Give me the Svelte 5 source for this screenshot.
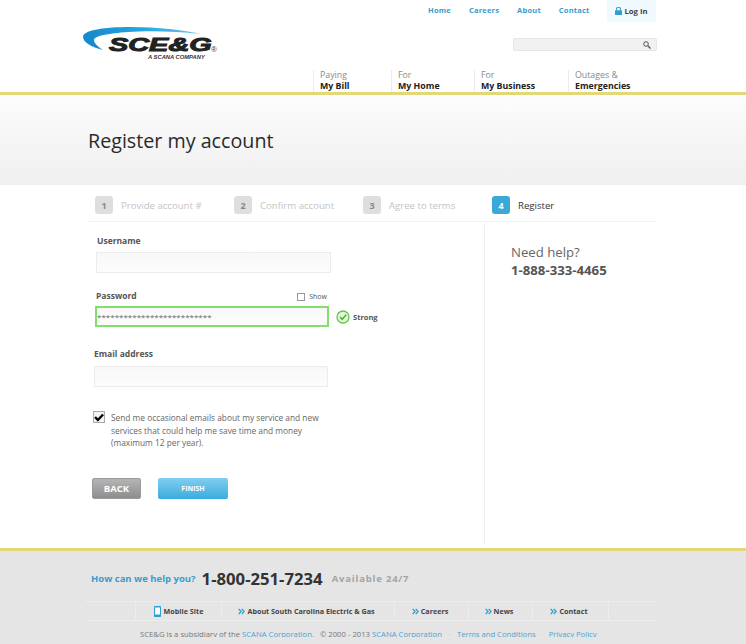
<script lang="ts">
  const topLinks = ['Home', 'Careers', 'About', 'Contact'];
  const mainNav = [
    { top: 'Paying', bottom: 'My Bill', width: 78 },
    { top: 'For', bottom: 'My Home', width: 83 },
    { top: 'For', bottom: 'My Business', width: 94 },
    { top: 'Outages &', bottom: 'Emergencies', width: 88 }
  ];
  const steps = [
    { n: 1, label: 'Provide account #', width: 139 },
    { n: 2, label: 'Confirm account', width: 129 },
    { n: 3, label: 'Agree to terms', width: 129 },
    { n: 4, label: 'Register', width: 80, active: true }
  ];
  const footerLinks = [
    { label: 'About South Carolina Electric & Gas', width: 173 },
    { label: 'Careers', width: 74 },
    { label: 'News', width: 64 },
    { label: 'Contact', width: 77 }
  ];
</script>

<div class="page">
  <header class="header">
    <div class="top-nav">
      {#each topLinks as link}
        <a class="top-link" href="#top">{link}</a>
      {/each}
      <a class="login" href="#top">
        <svg width="7" height="8" viewBox="0 0 7 8"><path d="M1.500 3.500V2.300a2 2 0 0 1 4 0v1.200" fill="none" stroke="#2f9fd0" stroke-width="1.100"/><rect y="3.200" width="7" height="4.800" rx=".6" fill="#2f9fd0"/></svg>
        Log In
      </a>
    </div>

    <div class="logo">
      <svg class="swoosh" width="120" height="26" viewBox="0 0 120 26">
        <defs>
          <linearGradient id="swoosh-fill" x1="0" x2="1" y1="0" y2="0">
            <stop offset="0" stop-color="#1488cc"/>
            <stop offset=".5" stop-color="#25a5e0"/>
            <stop offset="1" stop-color="#6cc3ea"/>
          </linearGradient>
        </defs>
        <path d="M20 23C8 20 0 15 0 10C0 3 22 0 47 0C75 0 100 3 118 7C92 4 65 3.500 45 5C25 6.500 11 9 11 13C11 16 15 20 20 23Z" fill="url(#swoosh-fill)"/>
      </svg>
      <span class="logo-word">SCE&amp;G</span>
      <span class="logo-reg">®</span>
      <span class="logo-sub">A SCANA COMPANY</span>
    </div>

    <div class="search">
      <svg width="8" height="8" viewBox="0 0 8 8"><circle cx="3" cy="3" r="2.300" fill="none" stroke="#555" stroke-width="1"/><path d="M4.800 4.800 7.500 7.500" stroke="#555" stroke-width="1.300"/></svg>
    </div>

    <nav class="main-nav">
      {#each mainNav as item}
        <a class="main-item" href="#top" style:width="{item.width}px">
          <span class="main-top">{item.top}</span>
          <span class="main-bottom">{item.bottom}</span>
        </a>
      {/each}
    </nav>
  </header>

  <section class="hero">
    <h1>Register my account</h1>
  </section>

  <main class="content">
    <ol class="steps">
      {#each steps as step}
        <li class="step" class:active={step.active} style:width="{step.width}px">
          <span class="step-num">{step.n}</span>
          <span class="step-label">{step.label}</span>
        </li>
      {/each}
    </ol>

    <div class="columns">
      <form class="form">
        <div class="field username">
          <label for="username">Username</label>
          <div id="username" class="input"></div>
        </div>

        <div class="field password">
          <div class="label-row">
            <label for="password">Password</label>
            <span class="show"><span class="show-box"></span>Show</span>
          </div>
          <div class="password-row">
            <div id="password" class="input strong">**************************</div>
            <span class="strength">
              <svg width="14" height="14" viewBox="0 0 14 14"><circle cx="7" cy="7" r="6" fill="#e4f7dc" stroke="#62c845" stroke-width="1.300"/><path d="M4 7l2.200 2.300L10.200 4.800" fill="none" stroke="#4fb233" stroke-width="1.600"/></svg>
              Strong
            </span>
          </div>
        </div>

        <div class="field email">
          <label for="email">Email address</label>
          <div id="email" class="input"></div>
        </div>

        <div class="optin">
          <span class="optin-box">
            <svg width="11" height="9" viewBox="0 0 11 9"><path d="M1.200 4 4.200 7.200 10 1.200" fill="none" stroke="#000" stroke-width="2.600"/></svg>
          </span>
          <p>Send me occasional emails about my service and new services that could help me save time and money (maximum 12 per year).</p>
        </div>

        <div class="buttons">
          <a class="btn back" href="#top">BACK</a>
          <a class="btn finish" href="#top">FINISH</a>
        </div>
      </form>

      <aside class="help">
        <p class="help-title">Need help?</p>
        <p class="help-phone">1-888-333-4465</p>
      </aside>
    </div>
  </main>

  <footer class="footer">
    <div class="callout">
      <span class="callout-q">How can we help you?</span>
      <span class="callout-phone">1-800-251-7234</span>
      <span class="callout-avail">Available 24/7</span>
    </div>

    <div class="footer-nav">
      <a class="foot-item mobile" href="#top">
        <svg width="7" height="11" viewBox="0 0 7 11"><rect x=".5" y=".5" width="6" height="10" rx="1" fill="#fff" stroke="#2f9fd0"/><rect x="0" y="8.500" width="7" height="2.500" rx="1" fill="#2f9fd0"/><rect x="0" y="0" width="7" height="1.500" rx=".7" fill="#2f9fd0"/></svg>
        Mobile Site
      </a>
      {#each footerLinks as link}
        <a class="foot-item" href="#top" style:width="{link.width}px">
          <svg width="7" height="7" viewBox="0 0 8 7"><path d="M.8.500 3.500 3.500.8 6.500M4.300.500 7 3.500 4.300 6.500" fill="none" stroke="#2f9fd0" stroke-width="1.500"/></svg>
          {link.label}
        </a>
      {/each}
    </div>

    <p class="legal">
      SCE&amp;G is a subsidiary of the <a href="#top">SCANA Corporation.</a>
      <span class="copy">© 2000 - 2013</span> <a href="#top">SCANA Corporation</a>
      <span class="sep first">·</span> <a href="#top">Terms and Conditions</a>
      <span class="sep">·</span> <a href="#top">Privacy Policy</a>
    </p>
  </footer>
</div>

<style>
  :global(body) {
    margin: 0;
    background: #fff;
  }

  .page {
    width: 746px;
    height: 644px;
    overflow: hidden;
    font-family: 'Open Sans', sans-serif;
    color: #555;
  }

  a {
    text-decoration: none;
  }

  .header {
    position: relative;
    height: 92px;
    border-bottom: 3px solid #e3d877;
    box-sizing: content-box;
  }

  .top-nav {
    display: flex;
    justify-content: flex-end;
    align-items: flex-start;
    padding-right: 90px;
  }

  .top-link {
    font-size: 7.500px;
    font-weight: 700;
    color: #3a9ccb;
    margin-right: 18px;
    line-height: 20px;
    letter-spacing: 0.2px;
  }

  .top-link:nth-child(4) {
    margin-right: 17.500px;
  }

  .login {
    display: flex;
    align-items: center;
    gap: 2px;
    width: 49px;
    height: 22px;
    justify-content: center;
    background: #eff9fe;
    font-size: 7.700px;
    font-weight: 700;
    color: #444;
  }

  .logo {
    position: absolute;
    left: 83px;
    top: 27px;
    width: 140px;
    height: 36px;
  }

  .swoosh {
    position: absolute;
    left: 0;
    top: 0;
  }

  .logo-word {
    position: absolute;
    left: 26px;
    top: 6px;
    font-family: 'Liberation Sans', sans-serif;
    font-weight: 700;
    font-style: italic;
    font-size: 19px;
    line-height: 24px;
    color: #222;
    -webkit-text-stroke: 1px #222;
    transform: scaleX(1.520);
    transform-origin: left center;
  }

  .logo-reg {
    position: absolute;
    left: 128px;
    top: 18px;
    font-family: 'Liberation Sans', sans-serif;
    font-size: 8px;
    line-height: 10px;
    color: #333;
  }

  .logo-sub {
    position: absolute;
    left: 65px;
    top: 26px;
    font-family: 'Liberation Sans', sans-serif;
    font-style: italic;
    font-weight: 700;
    font-size: 5.800px;
    line-height: 8px;
    color: #333;
    white-space: nowrap;
  }

  .search {
    position: absolute;
    left: 513px;
    top: 38px;
    width: 144px;
    height: 13px;
    box-sizing: border-box;
    background: #f1f1f1;
    border: 1px solid #e6e6e6;
    border-radius: 2px;
    display: flex;
    align-items: center;
    justify-content: flex-end;
    padding-right: 5px;
  }

  .main-nav {
    position: absolute;
    left: 313px;
    top: 70px;
    display: flex;
  }

  .main-item {
    display: flex;
    flex-direction: column;
    box-sizing: border-box;
    height: 22px;
    padding-left: 6px;
    border-left: 1px solid #ececec;
    font-size: 8.800px;
    line-height: 11px;
  }

  .main-top {
    color: #8a8a8a;
  }

  .main-bottom {
    color: #222;
    font-weight: 700;
  }

  .hero {
    height: 90px;
    background: linear-gradient(#fdfdfd, #efefef);
    box-sizing: border-box;
    padding: 32px 0 0 88px;
  }

  h1 {
    margin: 0;
    font-size: 19.700px;
    line-height: 27px;
    font-weight: 400;
    color: #2a2a2a;
  }

  .content {
    height: 363px;
    padding-left: 88px;
  }

  .steps {
    list-style: none;
    margin: 0;
    padding: 0 0 0 7px;
    width: 568px;
    height: 37px;
    box-sizing: border-box;
    display: flex;
    align-items: flex-start;
    border-bottom: 1px solid #f2f2f2;
  }

  .step {
    display: flex;
    align-items: center;
    gap: 8px;
    padding-top: 11px;
    box-sizing: border-box;
  }

  .step-num {
    width: 18px;
    height: 18px;
    border-radius: 3px;
    background: #dedede;
    color: #888;
    font-size: 9px;
    font-weight: 700;
    display: flex;
    align-items: center;
    justify-content: center;
  }

  .step-label {
    font-size: 9.600px;
    color: #c4c4c4;
    white-space: nowrap;
  }

  .active .step-num {
    background: #3aa9d6;
    color: #fff;
  }

  .active .step-label {
    color: #333;
  }

  .columns {
    display: flex;
    height: 325px;
    margin-top: 1px;
  }

  .form {
    width: 396px;
    box-sizing: border-box;
  }

  .field label {
    font-size: 8.500px;
    font-weight: 700;
    color: #555;
    line-height: 12px;
    display: block;
  }

  .input {
    box-sizing: border-box;
    height: 21px;
    width: 235px;
    background: linear-gradient(#f8f8f8, #fcfcfc);
    border: 1px solid #ececec;
    font-size: 8px;
    color: #666;
  }

  .username {
    padding: 12px 0 0 8px;
  }

  .username label {
    margin: 0 0 5px 1px;
  }

  .password {
    padding: 17px 0 0 7px;
  }

  .password label {
    margin-left: 1px;
  }

  .label-row {
    display: flex;
    justify-content: space-between;
    align-items: flex-end;
    width: 232px;
    margin-bottom: 4px;
  }

  .show {
    display: flex;
    align-items: center;
    gap: 4px;
    font-size: 7px;
    line-height: 10px;
    color: #555;
  }

  .show-box {
    width: 6px;
    height: 6px;
    border: 1px solid #999;
    background: #fff;
  }

  .password-row {
    display: flex;
    align-items: center;
    gap: 7px;
  }

  .input.strong {
    width: 234px;
    border: 2px solid #83df6d;
    line-height: 17px;
  }

  .strength {
    display: flex;
    align-items: center;
    gap: 3px;
    font-size: 7.500px;
    font-weight: 700;
    color: #555;
  }

  .email {
    padding: 21px 0 0 6px;
  }

  .email label {
    margin: 0 0 6px;
  }

  .email .input {
    width: 234px;
  }

  .optin {
    display: flex;
    gap: 6px;
    margin: 24px 0 0 5px;
  }

  .optin-box {
    flex: none;
    width: 10px;
    height: 10px;
    border: 1px solid #aaa;
    background: #f4f4f4;
    display: flex;
    align-items: center;
    justify-content: center;
    box-sizing: content-box;
  }

  .optin p {
    margin: 1px 0 0;
    width: 222px;
    font-size: 8.340px;
    line-height: 12.500px;
    color: #666;
  }

  .buttons {
    display: flex;
    gap: 17px;
    margin: 28px 0 0 4px;
  }

  .btn {
    display: flex;
    align-items: center;
    justify-content: center;
    box-sizing: border-box;
    height: 21px;
    border-radius: 2px;
    color: #fff;
    font-weight: 700;
  }

  .back {
    width: 49px;
    font-size: 9.500px;
    background: linear-gradient(#b5b5b5, #8e8e8e);
    border: 1px solid #9a9a9a;
  }

  .finish {
    width: 70px;
    font-size: 7px;
    background: linear-gradient(#7fcfef, #3cabde);
  }

  .help {
    border-left: 1px solid #eee;
    margin-top: 2px;
    padding: 18px 0 0 26px;
    height: 320px;
    box-sizing: border-box;
  }

  .help p {
    margin: 0;
  }

  .help-title {
    font-size: 13.200px;
    line-height: 18px;
    color: #666;
  }

  .help-phone {
    font-size: 13.200px;
    line-height: 18px;
    font-weight: 700;
    color: #555;
  }

  .footer {
    height: 96px;
    border-top: 3px solid #e3d877;
    background: #e5e5e5;
    box-sizing: border-box;
  }

  .callout {
    display: flex;
    align-items: center;
    gap: 6px;
    padding: 15px 0 0 91px;
    height: 24px;
    box-sizing: content-box;
  }

  .callout-q {
    font-size: 9.500px;
    font-weight: 700;
    color: #3a9ccb;
  }

  .callout-phone {
    font-size: 16.700px;
    font-weight: 700;
    color: #333;
  }

  .callout-avail {
    margin-left: 3px;
    font-size: 9.500px;
    font-weight: 700;
    color: #a4a4a4;
    letter-spacing: 0.8px;
  }

  .footer-nav {
    display: flex;
    margin: 11px 0 0 85px;
    width: 573px;
    height: 20px;
    padding-left: 50px;
    box-sizing: border-box;
    border-top: 1px solid #ececec;
    border-bottom: 1px solid #ececec;
  }

  .foot-item {
    display: flex;
    align-items: center;
    justify-content: center;
    gap: 2px;
    padding-right: 3px;
    border-left: 1px solid #ececec;
    font-size: 7.200px;
    font-weight: 700;
    color: #444;
    white-space: nowrap;
    box-sizing: border-box;
  }

  .foot-item.mobile {
    width: 86px;
    padding-right: 0;
    gap: 3px;
  }

  .foot-item:last-child {
    border-right: 1px solid #ececec;
  }

  /* the last line is cut off under its descenders in the original */
  .legal {
    margin: 7px 0 0 140px;
    height: 9px;
    overflow: hidden;
    font-size: 7.700px;
    line-height: 12px;
    color: #777;
    white-space: nowrap;
  }

  .legal a {
    color: #4da3cf;
  }

  .sep {
    color: #bbb;
    margin: 0 3.500px;
  }

  .sep.first {
    margin: 0 4.500px;
  }

  .copy {
    margin-left: 4px;
  }
</style>
